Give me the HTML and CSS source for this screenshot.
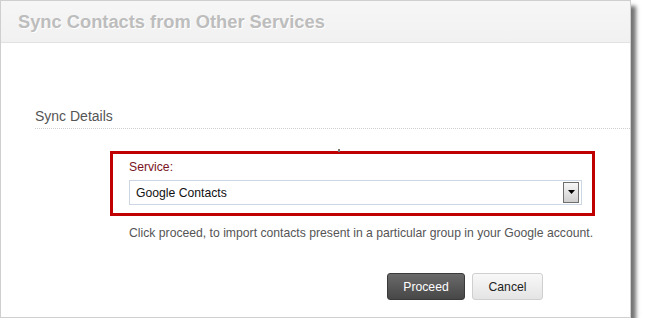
FILE: index.html
```html
<!DOCTYPE html>
<html>
<head>
<meta charset="utf-8">
<link rel="stylesheet" href="styles.css">
</head>
<body>
<div class="panel">
  <div class="header"><h1 class="title">Sync Contacts from Other Services</h1></div>
  <div class="content">
    <h2 class="section">Sync Details</h2>
    <span class="tick"></span>
    <div class="highlight">
      <div class="label">Service:</div>
      <div class="select">
        <span class="value">Google Contacts</span>
        <span class="arrow"><svg width="9" height="5" viewBox="0 0 9 5"><path d="M1 0 H8 L4.5 4 Z" fill="#000"/></svg></span>
      </div>
    </div>
    <p class="help">Click proceed, to import contacts present in a particular group in your Google account.</p>
    <div class="actions">
      <button class="btn primary">Proceed</button>
      <button class="btn">Cancel</button>
    </div>
  </div>
</div>
</body>
</html>
```
FILE: styles.css
```css
html, body {
  margin: 0;
  padding: 0;
  background: #fff;
}
body {
  font-family: "Liberation Sans", Arial, sans-serif;
}
.panel {
  width: 629px;
  height: 316px;
  border: 1px solid #cfcfcf;
  background: #fff;
  box-shadow: 5px 6px 4px rgba(0,0,0,0.55);
  position: relative;
}
.header {
  height: 41px;
  background: linear-gradient(#f6f6f6, #f1f1f1);
  border-bottom: 1px solid #e2e2e2;
  display: flex;
  align-items: center;
}
.title {
  margin: 0 0 0 17px;
  font-size: 18.3px;
  font-weight: bold;
  color: #bdbdbd;
  text-shadow: 1px 1px 0 #fff;
  line-height: 22px;
  padding-top: 1px;
}
.content {
  padding-top: 65px;
}
.section {
  margin: 0 0 0 34px;
  font-size: 14px;
  font-weight: normal;
  color: #555;
  line-height: 17px;
  padding-bottom: 3px;
  border-bottom: 1px dotted #cfcfcf;
}
.tick {
  position: absolute;
  left: 337px;
  top: 148px;
  width: 2px;
  height: 3px;
  background: #777;
}
.highlight {
  box-sizing: border-box;
  margin: 22px 0 0 109px;
  width: 485px;
  border: 3px solid #c00000;
  padding: 6px 10px 8px 16px;
}
.label {
  font-size: 12.2px;
  line-height: 14px;
  color: #7a1424;
}
.select {
  margin-top: 6px;
  height: 23px;
  border: 1px solid #cdd7e3;
  background: #fff;
  display: flex;
  align-items: center;
  justify-content: space-between;
  padding: 0 2px 0 6px;
}
.value {
  font-size: 12.2px;
  color: #111;
}
.arrow {
  width: 14px;
  height: 19px;
  border: 1px solid #6e6e6e;
  background: linear-gradient(#f7f7f7, #cfcfcf);
  display: flex;
  align-items: center;
  justify-content: center;
}
.help {
  margin: 10px 0 0 128px;
  font-size: 12.2px;
  line-height: 14px;
  color: #555;
}
.actions {
  margin: 33px 0 0 386px;
  display: flex;
  gap: 7px;
}
.btn {
  height: 27px;
  width: 71px;
  border: 1px solid #cfcfcf;
  border-radius: 3px;
  background: linear-gradient(#f8f8f8, #e4e4e4);
  font-family: "Liberation Sans", Arial, sans-serif;
  font-size: 12.2px;
  color: #222;
  padding: 0;
}
.btn.primary {
  width: 78px;
  border-color: #3a3a3a;
  background: linear-gradient(#6a6a6a, #474747);
  color: #fff;
}
```
